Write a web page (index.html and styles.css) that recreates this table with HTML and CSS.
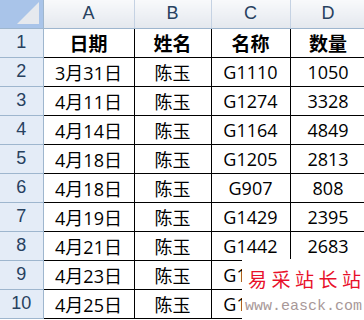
FILE: index.html
```html
<!DOCTYPE html>
<html>
<head>
<meta charset="utf-8">
<link rel="stylesheet" href="styles.css">
</head>
<body>
<div class="sheet">
<table class="grid">
<colgroup>
<col class="c-rh"><col class="c-a"><col class="c-b"><col class="c-c"><col class="c-d">
</colgroup>
<thead>
<tr><th class="corner"><span class="tri"></span></th><th class="ch">A</th><th class="ch">B</th><th class="ch">C</th><th class="ch">D</th></tr>
</thead>
<tbody>
<tr><th class="rh">1</th><td class="hd">日期</td><td class="hd">姓名</td><td class="hd">名称</td><td class="hd">数量</td></tr>
<tr><th class="rh">2</th><td>3月31日</td><td>陈玉</td><td>G1110</td><td>1050</td></tr>
<tr><th class="rh">3</th><td>4月11日</td><td>陈玉</td><td>G1274</td><td>3328</td></tr>
<tr><th class="rh">4</th><td>4月14日</td><td>陈玉</td><td>G1164</td><td>4849</td></tr>
<tr><th class="rh">5</th><td>4月18日</td><td>陈玉</td><td>G1205</td><td>2813</td></tr>
<tr><th class="rh">6</th><td>4月18日</td><td>陈玉</td><td>G907</td><td>808</td></tr>
<tr><th class="rh">7</th><td>4月19日</td><td>陈玉</td><td>G1429</td><td>2395</td></tr>
<tr><th class="rh">8</th><td>4月21日</td><td>陈玉</td><td>G1442</td><td>2683</td></tr>
<tr><th class="rh">9</th><td>4月23日</td><td>陈玉</td><td>G1420</td><td>1856</td></tr>
<tr><th class="rh">10</th><td>4月25日</td><td>陈玉</td><td>G1436</td><td>2470</td></tr>
</tbody>
</table>
<div class="mark">
<div class="mark-cn">易采站长站</div>
<div class="mark-url">www.easck.com</div>
</div>
</div>
</body>
</html>
```
FILE: styles.css
```css
html, body {
  margin: 0;
  padding: 0;
  background: #ffffff;
  overflow: hidden;
}
.sheet {
  position: relative;
  width: 364px;
  height: 320px;
  overflow: hidden;
}
.grid {
  border-collapse: collapse;
  table-layout: fixed;
  width: 366px;
  font-family: "Open Sans", "Noto Sans CJK SC", sans-serif;
}
.c-rh { width: 43px; }
.c-a { width: 91px; }
.c-b { width: 77px; }
.c-c { width: 79px; }
.c-d { width: 76px; }
.grid th, .grid td {
  padding: 0;
  text-align: center;
  white-space: nowrap;
  overflow: hidden;
}
.grid thead th {
  height: 28px;
  background: linear-gradient(#f8f9fb, #e4e8ee);
  border-right: 1px solid #c5d2e3;
  border-bottom: 1px solid #9eb6ce;
  font-family: "Liberation Sans", "Open Sans", sans-serif;
  font-weight: normal;
  font-size: 18px;
  color: #27415f;
  box-sizing: border-box;
}
.grid thead th.corner {
  position: relative;
  background: #a9c4e9;
  border-right: 1px solid #9eb6ce;
}
.tri {
  position: absolute;
  right: 4px;
  bottom: 4px;
  width: 0;
  height: 0;
  border-left: 22px solid transparent;
  border-bottom: 22px solid #e6e9ee;
}
.grid th.rh {
  height: 28px;
  background: #e4ecf7;
  border-right: 1px solid #9eb6ce;
  border-bottom: 1px solid #9eb6ce;
  font-family: "Liberation Sans", "Open Sans", sans-serif;
  font-weight: normal;
  font-size: 18px;
  color: #27415f;
}
.grid td {
  height: 28px;
  border: 1px solid #000000;
  font-size: 18px;
  color: #000000;
  font-family: "Open Sans", "Noto Sans CJK SC", sans-serif;
}
.grid td.hd {
  font-family: "Noto Sans CJK SC", sans-serif;
  font-weight: bold;
  font-size: 19px;
}
.mark {
  position: absolute;
  left: 242px;
  top: 259px;
  width: 124px;
  height: 62px;
  background: #ffffff;
}
.mark-cn {
  margin: 8px 0 0 6px;
  font-family: "Noto Sans CJK SC", serif;
  font-size: 19px;
  line-height: 24px;
  letter-spacing: 4.5px;
  white-space: nowrap;
  color: #e8102a;
}
.mark-url {
  margin: 8px 0 0 3px;
  font-family: "Liberation Mono", monospace;
  font-size: 15px;
  line-height: 16px;
  white-space: nowrap;
  color: #a89898;
}
```
